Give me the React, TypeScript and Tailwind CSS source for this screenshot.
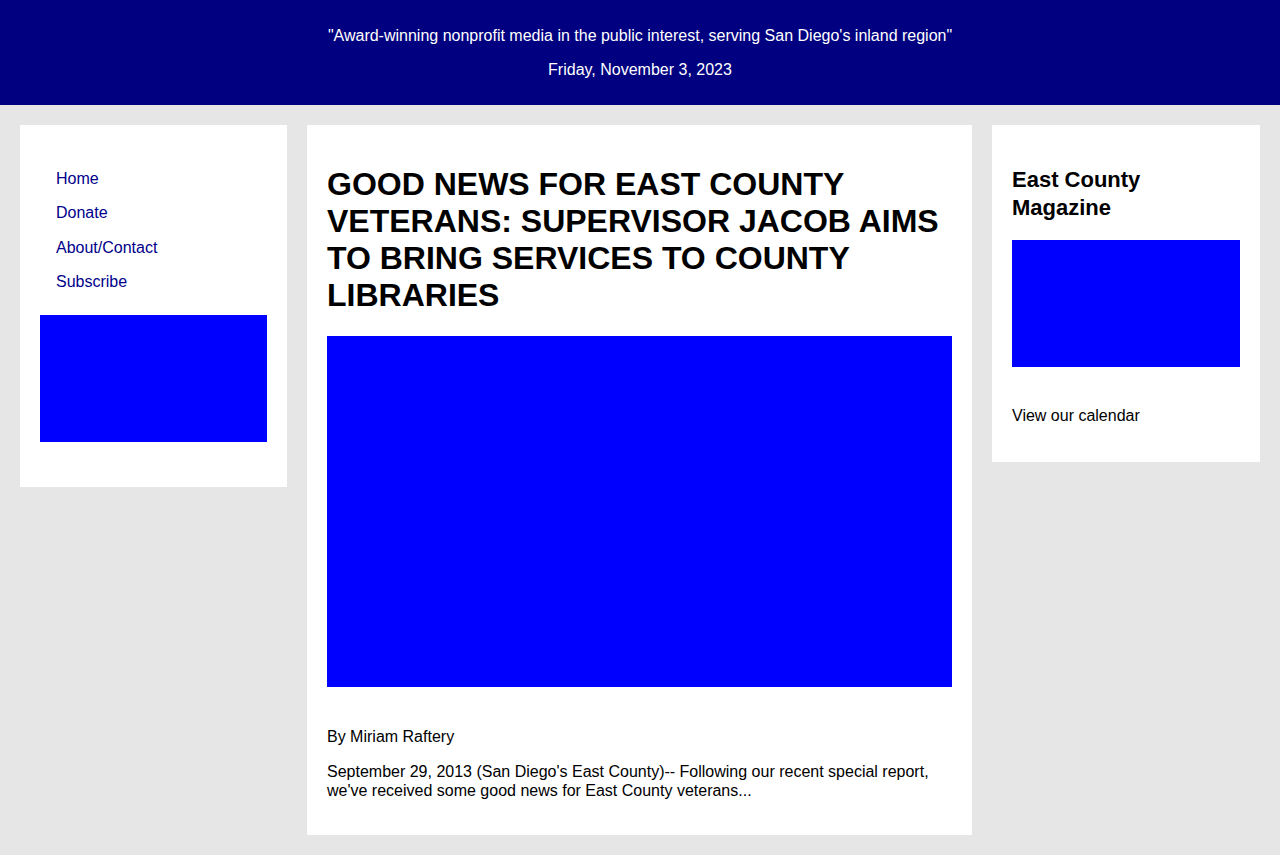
import React from 'react';

const navLinks = ['Home', 'Donate', 'About/Contact', 'Subscribe'];

export default function App() {
  return (
    <div className="min-h-[855px] bg-[#e6e6e6] font-['Liberation_Sans',Arial,sans-serif] text-black">
      {/* Top banner */}
      <header className="h-[105px] bg-[#000080] text-white flex flex-col items-center pt-[27px] gap-4 text-base leading-[18px]">
        <p>"Award-winning nonprofit media in the public interest, serving San Diego's inland region"</p>
        <p>Friday, November 3, 2023</p>
      </header>

      <main className="flex items-start gap-5 p-5">
        {/* Left sidebar */}
        <aside className="w-[267px] shrink-0 bg-white px-5 pt-5 pb-5">
          <ul className="pl-4 mt-[25px] flex flex-col gap-4 text-base leading-[18.4px]">
            {navLinks.map((link) => (
              <li key={link}>
                <a href="#" className="text-[#00008b]">{link}</a>
              </li>
            ))}
          </ul>
          <div className="mt-[23px] mb-[25px] h-[127px] w-full bg-[#0000ff]"></div>
        </aside>

        {/* Main article */}
        <article className="w-[665px] shrink-0 bg-white p-5">
          <h1 className="mt-[21px] text-[32px] leading-[37px] font-bold uppercase">
            Good News for East County Veterans: Supervisor Jacob Aims to Bring Services to County Libraries
          </h1>
          <div className="mt-[22px] h-[351px] w-full bg-[#0000ff]"></div>
          <p className="mt-[41px] text-base leading-[18px]">By Miriam Raftery</p>
          <p className="mt-4 mb-[15px] text-base leading-[19px] pr-[20px]">
            September 29, 2013 (San Diego's East County)-- Following our recent special report, we've received some good news for East County veterans...
          </p>
        </article>

        {/* Right sidebar */}
        <aside className="w-[268px] shrink-0 bg-white p-5">
          <h2 className="mt-[21px] text-[22px] leading-[28px] font-bold">East County Magazine</h2>
          <div className="mt-[18px] h-[127px] w-full bg-[#0000ff]"></div>
          <p className="mt-[40px] mb-[17px] text-base leading-[18px]">
            <a href="#">View our calendar</a>
          </p>
        </aside>
      </main>
    </div>
  );
}
